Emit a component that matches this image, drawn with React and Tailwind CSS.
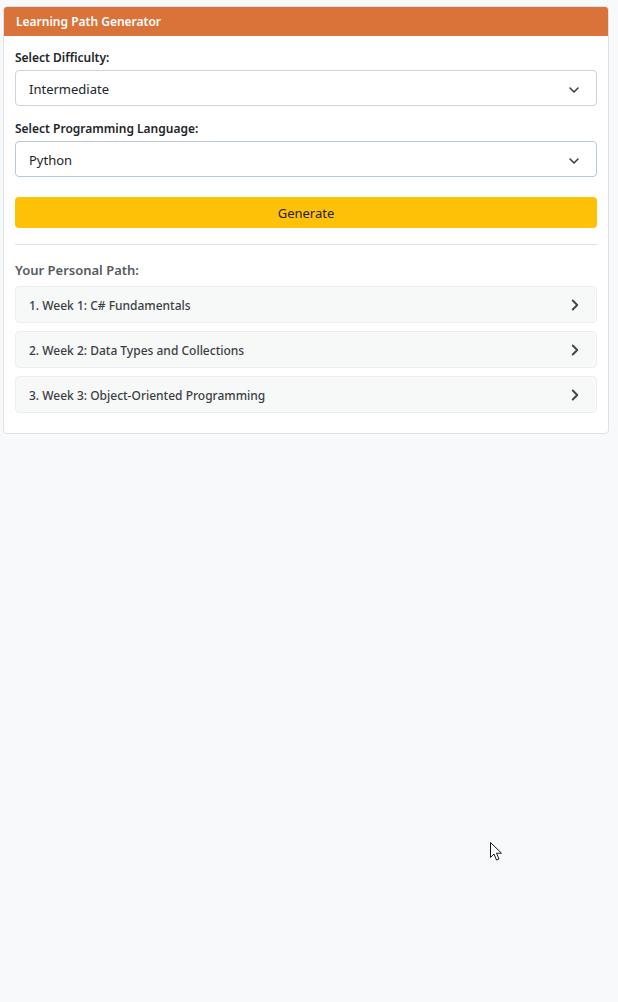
import { ChevronDown, ChevronRight } from 'lucide-react';

const weeks = [
  '1. Week 1: C# Fundamentals',
  '2. Week 2: Data Types and Collections',
  '3. Week 3: Object-Oriented Programming'
];

function SelectBox({ value, focused }) {
  return (
    <div
      className={`flex h-[36px] items-center justify-between rounded-[4px] border bg-white pl-[13px] pr-[14px] pt-[3px] text-[13px] text-[#212529] ${
        focused ? 'border-[#b6c7e2]' : 'border-[#ced4da]'
      }`}
    >
      <span className="mt-[1px]">{value}</span>
      <ChevronDown size={16} strokeWidth={2.2} className="text-[#343a40]" />
    </div>
  );
}

export default function App() {
  return (
    <div
      className="relative min-h-[1002px] w-full bg-[#f8f9fa] pt-[6px]"
      style={{ fontFamily: '"Noto Sans", "Open Sans", sans-serif' }}
    >
      <div className="ml-[3px] w-[606px] overflow-hidden rounded-[4px] border border-[#dee2e6] bg-white">
        <div className="flex h-[29px] items-center bg-[#d9733a] px-[12px] text-[12px] font-semibold text-white">
          Learning Path Generator
        </div>
        <div className="px-[11px] pb-[20px] pt-[13px]">
          <p className="mb-[3px] text-[12px] font-semibold text-[#212529]">Select Difficulty:</p>
          <SelectBox value="Intermediate" />
          <p className="mb-[3px] mt-[14px] text-[12px] font-semibold text-[#212529]">Select Programming Language:</p>
          <SelectBox value="Python" focused />
          <button
            type="button"
            className="mt-[20px] flex h-[31px] w-full items-center justify-center rounded-[4px] bg-[#ffc107] pt-[2px] text-[13px] text-[#212529]"
          >
            Generate
          </button>
          <hr className="mt-[16px] border-t border-[#dee2e6]" />
          <p className="mt-[16px] text-[13px] font-semibold text-[#555b61]">Your Personal Path:</p>
          <div className="mt-[5px] flex flex-col gap-[8px]">
            {weeks.map((w) => (
              <div
                key={w}
                className="flex h-[37px] items-center justify-between rounded-[4px] border border-[#eceeef] bg-[#f7f8f8] pl-[13px] pr-[12px] pt-[2px]"
              >
                <span className="mt-[2px] text-[12px] font-medium text-[#3a3f44]">{w}</span>
                <ChevronRight size={18} strokeWidth={2.6} className="text-[#4a4346]" />
              </div>
            ))}
          </div>
        </div>
      </div>
      <svg
        className="absolute left-[490px] top-[842px]"
        width="13"
        height="20"
        viewBox="0 0 13 20"
      >
        <path
          d="M0.5 0.5 L0.5 15.5 L4 12 L6.5 18 L9 17 L6.5 11.2 L11.5 11.2 Z"
          fill="white"
          stroke="#1a1a1a"
          strokeWidth="1"
          strokeLinejoin="round"
        />
      </svg>
    </div>
  );
}
